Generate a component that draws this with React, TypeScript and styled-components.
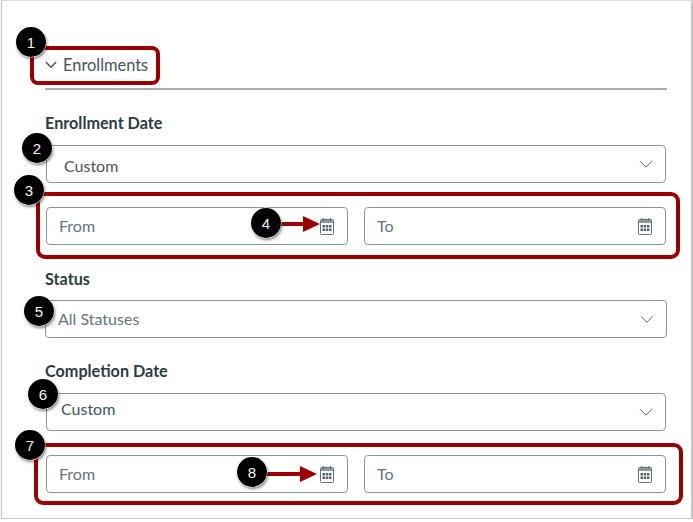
import * as React from 'react'
import styled, { createGlobalStyle } from 'styled-components'

const GlobalStyle = createGlobalStyle`
    html, body {
        margin: 0;
        background: #fff;
    }
`;

const red = '#9b0000';

//=================================/
const Frame = styled.div`
    position: relative;
    box-sizing: border-box;
    width: 691px;
    height: 519px;
    margin-left: 1px;
    padding: 45px 24px 0 43px;
    background: #fff;
    border: 1px solid #c4c4c4;
    border-top-color: #dcdcdc;
    box-shadow: 1px 1px 2px rgba(0, 0, 0, 0.35);
    font-family: "Lato", "Liberation Sans", sans-serif;
    color: #2d3b45;
`;

const SectionHeader = styled.div`
    position: relative;
    display: flex;
    align-items: center;
    gap: 6px;
    height: 38px;
    padding-bottom: 4px;
    font-size: 16.4px;
    color: #46535d;
    border-bottom: 2px solid #a3acb3;
`;

const HeaderTitle = styled.span`
    padding-bottom: 2px;
`;

const HeaderHighlight = styled.div`
    position: absolute;
    left: -15px;
    top: 0;
    width: 122px;
    height: 31px;
    border: 4px solid ${red};
    border-radius: 8px;
`;

const Label = styled.div<{ $top: number }>`
    margin-top: ${props => props.$top}px;
    height: 20px;
    line-height: 20px;
    font-size: 16.2px;
    font-weight: 700;
`;

const Box = styled.div<{ $top: number; $indent: number; $muted?: boolean; $bleed?: boolean }>`
    box-sizing: border-box;
    display: flex;
    align-items: center;
    justify-content: space-between;
    height: 38px;
    margin-top: ${props => props.$top}px;
    margin-left: ${props => (props.$bleed ? 0 : 1)}px;
    margin-right: ${props => (props.$bleed ? 0 : 1)}px;
    padding: 0 12px 0 ${props => props.$indent}px;
    border: 1px solid #8a949c;
    border-radius: 4px;
    background: #fff;
    font-size: 16px;
    color: ${props => (props.$muted ? '#66737d' : '#46535d')};
`;

// value text sits a little off centre in each box of the screenshot
const Value = styled.span<{ $above?: number; $below?: number }>`
    padding-top: ${props => props.$below || 0}px;
    padding-bottom: ${props => props.$above || 0}px;
`;

const RangeRow = styled.div<{ $top: number }>`
    position: relative;
    display: flex;
    gap: 16px;
    margin: ${props => props.$top}px 1px 0;
`;

const RangeHighlight = styled.div<{ $inset: string }>`
    position: absolute;
    inset: ${props => props.$inset};
    border: 4px solid ${red};
    border-radius: 9px;
`;

const DateField = styled.div`
    box-sizing: border-box;
    position: relative;
    flex: 1;
    display: flex;
    align-items: center;
    justify-content: space-between;
    height: 38px;
    padding: 0 13px 0 12px;
    border: 1px solid #8a949c;
    border-radius: 4px;
    background: #fff;
    font-size: 16px;
    color: #66737d;
`;

const Badge = styled.div<{ $x: number; $y: number }>`
    position: absolute;
    left: ${props => props.$x - 17}px;
    top: ${props => props.$y - 16}px;
    width: 30px;
    height: 30px;
    display: flex;
    align-items: center;
    justify-content: center;
    border-radius: 50%;
    background: #000;
    box-shadow: 0 0 0 0.5px #fff, 1px 2px 3px rgba(0, 0, 0, 0.55);
    font-family: "Liberation Sans", sans-serif;
    font-size: 15px;
    color: #f4f4f4;
`;

const ArrowMark = styled.svg<{ $x: number; $y: number }>`
    position: absolute;
    left: ${props => props.$x}px;
    top: ${props => props.$y}px;
`;
//=================================/

const Chevron: React.FC<{ size: number; width: number; color: string }> = ({ size, width, color }) => (
    <svg width={size} height={size * 0.6} viewBox="0 0 14 8" fill="none">
        <path d="M1 1l6 6 6-6" stroke={color} strokeWidth={width} />
    </svg>
);

const Calendar: React.FC = () => (
    <svg width="14" height="17" viewBox="0 0 14 17" fill="none">
        <path d="M3.5 0v2.5M10.5 0v2.5" stroke="#56636d" strokeWidth="1" />
        <rect x="0.5" y="1.5" width="13" height="15" rx="1" stroke="#66727b" strokeWidth="1" />
        <rect x="1" y="2" width="12" height="3" fill="#8b959c" />
        {[7, 10.5].map(y =>
            [2.5, 5.75, 9].map(x => <rect key={`${x}-${y}`} x={x} y={y} width="2.5" height="2.5" fill="#56636d" />)
        )}
    </svg>
);

const Arrow: React.FC<{ x: number; y: number; length: number }> = ({ x, y, length }) => (
    <ArrowMark $x={x} $y={y} width={length} height="16" viewBox={`0 0 ${length} 16`}>
        <path d={`M0 6h${length - 17}V0l17 8-17 8v-6H0z`} fill={red} />
    </ArrowMark>
);

const Range: React.FC<{ top: number; inset: string }> = ({ top, inset }) => (
    <RangeRow $top={top}>
        <RangeHighlight $inset={inset} />
        <DateField><Value $above={2}>From</Value><Calendar /></DateField>
        <DateField><Value $above={2}>To</Value><Calendar /></DateField>
    </RangeRow>
);

interface ISelectProps {
    top: number;
    indent: number;
    muted?: boolean;
    bleed?: boolean;
    above?: number;
    below?: number;
    children: React.ReactNode;
}

const Select: React.FC<ISelectProps> = ({ top, indent, muted, bleed, above, below, children }) => (
    <Box $top={top} $indent={indent} $muted={muted} $bleed={bleed}>
        <Value $above={above} $below={below}>{children}</Value>
        <Chevron size={14} width={1} color="#56636d" />
    </Box>
);

//=====================================================================================//
export default function App() {
    return (
        <>
            <GlobalStyle />
            <Frame>
                <SectionHeader>
                    <HeaderHighlight />
                    <Chevron size={12} width={1.6} color="#46535d" />
                    <HeaderTitle>Enrollments</HeaderTitle>
                </SectionHeader>

                <Label $top={23}>Enrollment Date</Label>
                <Select top={12} indent={17} below={2}>Custom</Select>
                <Range top={24} inset="-15px -14px -14px -10px" />

                <Label $top={24}>Status</Label>
                <Select top={11} indent={12} muted bleed above={2}>All Statuses</Select>

                <Label $top={23}>Completion Date</Label>
                <Select top={12} indent={14} above={8}>Custom</Select>
                <Range top={24} inset="-12px -17px -12px -12px" />

                <Arrow x={279} y={215} length={39} />
                <Arrow x={264} y={465} length={51} />

                <Badge $x={31} $y={42}>1</Badge>
                <Badge $x={37} $y={148}>2</Badge>
                <Badge $x={29} $y={190}>3</Badge>
                <Badge $x={266} $y={223}>4</Badge>
                <Badge $x={39} $y={311}>5</Badge>
                <Badge $x={43} $y={394}>6</Badge>
                <Badge $x={30} $y={445}>7</Badge>
                <Badge $x={252} $y={472}>8</Badge>
            </Frame>
        </>
    );
}
//=====================================================================================//
